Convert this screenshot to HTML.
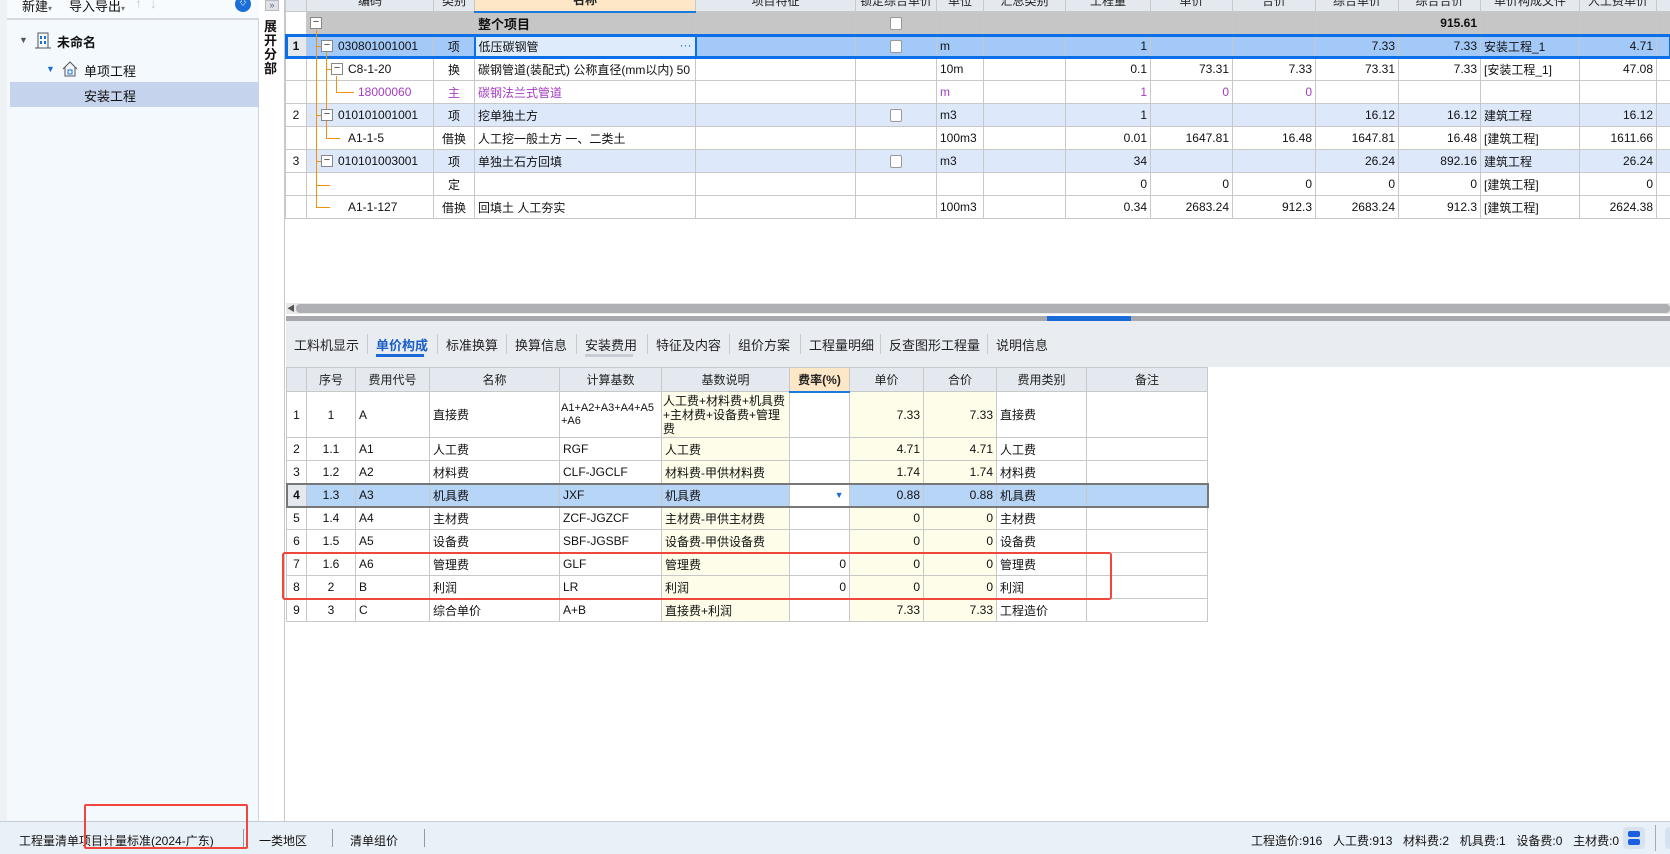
<!DOCTYPE html>
<html><head><meta charset="utf-8"><style>
*{margin:0;padding:0;box-sizing:border-box}
body{width:1670px;height:854px;position:relative;overflow:hidden;background:#fff;font:12px "Liberation Sans","Noto Sans CJK SC",sans-serif;color:#111}
.abs{position:absolute}
table{border-collapse:collapse;table-layout:fixed;position:absolute}
td{border:1px solid #c8c8c8;height:23px;padding:0 3px;white-space:nowrap;overflow:hidden;vertical-align:middle}
.r{text-align:right}.c{text-align:center}
.hd td{background:#e4e9f0;text-align:center;color:#222}
.bx{position:absolute;width:12px;height:12px;border:1px solid #888;background:#fff;font-size:11px;line-height:9px;text-align:center;color:#333}
.ol{position:absolute;background:#f0920e}
.cb{display:inline-block;width:12px;height:13px;border:1px solid #999;border-radius:2px;background:#fff;vertical-align:middle}
.pu{color:#a43cc0}
.y{background:#fefde9}
.tab{position:absolute;top:335px;font-size:13px;color:#222}
.sep{position:absolute;width:1px;background:#c8ccd2}
</style></head><body>
<!-- left panel -->
<div class="abs" style="left:0;top:0;width:7px;height:821px;background:#eef2f5"></div>
<div class="abs" style="left:7px;top:0;width:252px;height:821px;background:#f3f9fd;border-right:1px solid #d0d6dc"></div>
<div class="abs" style="left:7px;top:0;width:252px;height:20px;background:#f8fbfd;border-bottom:2px solid #d4dae0"></div>
<div class="abs" style="left:22px;top:-4px;font-size:13px">新建<span style="font-size:8px;color:#777">▾</span></div>
<div class="abs" style="left:69px;top:-4px;font-size:13px">导入导出<span style="font-size:8px;color:#777">▾</span></div>
<div class="abs" style="left:135px;top:-5px;font-size:14px;color:#ccc">↑ &nbsp;↓</div>
<div class="abs" style="left:235px;top:-4px;width:16px;height:16px;border-radius:8px;background:#1a6fd8;color:#fff;font-size:10px;text-align:center;line-height:14px">⇩</div>
<div class="abs" style="left:19px;top:35px;font-size:9px;color:#555">▼</div>
<svg class="abs" style="left:35px;top:31px" width="16" height="18"><rect x="3" y="2" width="10" height="15" fill="none" stroke="#555"/><rect x="5" y="5" width="2" height="3" fill="#1a6fd8"/><rect x="9" y="5" width="2" height="3" fill="#1a6fd8"/><rect x="5" y="10" width="2" height="3" fill="#1a6fd8"/><rect x="9" y="10" width="2" height="3" fill="#1a6fd8"/><line x1="0" y1="17" x2="16" y2="17" stroke="#555"/></svg>
<div class="abs" style="left:57px;top:32px;font-size:13px;font-weight:bold">未命名</div>
<div class="abs" style="left:46px;top:64px;font-size:9px;color:#1a6fd8">▼</div>
<svg class="abs" style="left:62px;top:61px" width="16" height="16"><path d="M1 8 L8 1 L15 8 M3 6 V15 H13 V6" fill="none" stroke="#555"/><rect x="6" y="9" width="4" height="4" fill="none" stroke="#1a6fd8"/></svg>
<div class="abs" style="left:84px;top:61px;font-size:13px">单项工程</div>
<div class="abs" style="left:10px;top:82px;width:249px;height:25px;background:#c5d3ec"></div>
<div class="abs" style="left:84px;top:86px;font-size:13px">安装工程</div>
<!-- vertical strip -->
<div class="abs" style="left:260px;top:0;width:25px;height:821px;background:#fff;border-right:1px solid #c8c8c8"></div>
<div class="abs" style="left:265px;top:0;width:14px;height:11px;background:#dde2e8;border:1px solid #bbb;font-size:9px;line-height:8px;text-align:center;color:#666">»</div>
<div class="abs" style="left:264px;top:20px;width:16px;font-size:13px;font-weight:bold;line-height:14px">展开分部</div>

<!-- top grid -->
<table style="left:285px;top:-12px;width:1385px">
<colgroup><col style="width:21px"><col style="width:127px"><col style="width:41px"><col style="width:221px"><col style="width:160px"><col style="width:81px"><col style="width:47px"><col style="width:82px"><col style="width:85px"><col style="width:82px"><col style="width:83px"><col style="width:83px"><col style="width:82px"><col style="width:99px"><col style="width:77px"><col style="width:14px"></colgroup>
<tr class="hd"><td></td><td>编码</td><td>类别</td><td style="background:#fde7c6;border-bottom:2px solid #1a7ae0;font-weight:bold">名称</td><td>项目特征</td><td>锁定综合单价</td><td>单位</td><td>汇总类别</td><td>工程量</td><td>单价</td><td>合价</td><td>综合单价</td><td>综合合价</td><td>单价构成文件</td><td>人工费单价</td><td></td></tr>
<tr style="background:#c6c6c6;font-weight:bold"><td style="background:#fff"></td><td></td><td></td><td style="font-size:13px">整个项目</td><td></td><td class="c"><span class="cb"></span></td><td></td><td></td><td></td><td></td><td></td><td></td><td class="r">915.61</td><td></td><td></td><td></td></tr>
<tr style="background:#a3c9f8;outline:3px solid #0a6fe8;outline-offset:-2px"><td class="c" style="background:#e4e9f0;font-weight:bold">1</td><td style="padding-left:31px">030801001001</td><td class="c">项</td><td style="background:#deebfb;border:2px solid #0a6fe8">低压碳钢管<span style="float:right;color:#1a6fd8">···</span></td><td></td><td class="c"><span class="cb"></span></td><td>m</td><td></td><td class="r">1</td><td></td><td></td><td class="r">7.33</td><td class="r">7.33</td><td>安装工程_1</td><td class="r">4.71</td><td></td></tr>
<tr><td></td><td style="padding-left:41px">C8-1-20</td><td class="c">换</td><td>碳钢管道(装配式) 公称直径(mm以内) 50</td><td></td><td></td><td>10m</td><td></td><td class="r">0.1</td><td class="r">73.31</td><td class="r">7.33</td><td class="r">73.31</td><td class="r">7.33</td><td>[安装工程_1]</td><td class="r">47.08</td><td></td></tr>
<tr class="pu"><td></td><td style="padding-left:51px">18000060</td><td class="c">主</td><td>碳钢法兰式管道</td><td></td><td></td><td>m</td><td></td><td class="r">1</td><td class="r">0</td><td class="r">0</td><td></td><td></td><td></td><td></td><td></td></tr>
<tr style="background:#dde9fb"><td class="c" style="background:#fff">2</td><td style="padding-left:31px">010101001001</td><td class="c">项</td><td>挖单独土方</td><td></td><td class="c"><span class="cb"></span></td><td>m3</td><td></td><td class="r">1</td><td></td><td></td><td class="r">16.12</td><td class="r">16.12</td><td>建筑工程</td><td class="r">16.12</td><td></td></tr>
<tr><td></td><td style="padding-left:41px">A1-1-5</td><td class="c">借换</td><td>人工挖一般土方 一、二类土</td><td></td><td></td><td>100m3</td><td></td><td class="r">0.01</td><td class="r">1647.81</td><td class="r">16.48</td><td class="r">1647.81</td><td class="r">16.48</td><td>[建筑工程]</td><td class="r">1611.66</td><td></td></tr>
<tr style="background:#dde9fb"><td class="c" style="background:#fff">3</td><td style="padding-left:31px">010101003001</td><td class="c">项</td><td>单独土石方回填</td><td></td><td class="c"><span class="cb"></span></td><td>m3</td><td></td><td class="r">34</td><td></td><td></td><td class="r">26.24</td><td class="r">892.16</td><td>建筑工程</td><td class="r">26.24</td><td></td></tr>
<tr><td></td><td></td><td class="c">定</td><td></td><td></td><td></td><td></td><td></td><td class="r">0</td><td class="r">0</td><td class="r">0</td><td class="r">0</td><td class="r">0</td><td>[建筑工程]</td><td class="r">0</td><td></td></tr>
<tr><td></td><td style="padding-left:41px">A1-1-127</td><td class="c">借换</td><td>回填土 人工夯实</td><td></td><td></td><td>100m3</td><td></td><td class="r">0.34</td><td class="r">2683.24</td><td class="r">912.3</td><td class="r">2683.24</td><td class="r">912.3</td><td>[建筑工程]</td><td class="r">2624.38</td><td></td></tr>
</table>
<!-- tree lines -->
<div class="ol" style="left:316px;top:30px;width:1px;height:178px"></div>
<div class="ol" style="left:316px;top:46px;width:5px;height:1px"></div>
<div class="ol" style="left:316px;top:115px;width:5px;height:1px"></div>
<div class="ol" style="left:316px;top:161px;width:5px;height:1px"></div>
<div class="ol" style="left:316px;top:185px;width:14px;height:1px"></div>
<div class="ol" style="left:316px;top:207px;width:14px;height:1px"></div>
<div class="ol" style="left:326px;top:52px;width:1px;height:86px"></div>
<div class="ol" style="left:326px;top:69px;width:5px;height:1px"></div>
<div class="ol" style="left:326px;top:138px;width:14px;height:1px"></div>
<div class="ol" style="left:336px;top:76px;width:1px;height:16px"></div>
<div class="ol" style="left:336px;top:92px;width:18px;height:1px"></div>
<div class="bx" style="left:310px;top:17px">−</div>
<div class="bx" style="left:321px;top:40px">−</div>
<div class="bx" style="left:331px;top:63px">−</div>
<div class="bx" style="left:321px;top:109px">−</div>
<div class="bx" style="left:321px;top:155px">−</div>

<!-- scrollbar / splitter -->
<div class="abs" style="left:286px;top:303px;width:1384px;height:11px;background:#e8e8e8"></div>
<div class="abs" style="left:296px;top:304px;width:1374px;height:9px;background:#aeb0b3;border-radius:4px"></div>
<div class="abs" style="left:287px;top:303px;font-size:8px;color:#555">◀</div>
<div class="abs" style="left:286px;top:316px;width:1384px;height:5px;background:#a6a8ab"></div>
<div class="abs" style="left:1047px;top:316px;width:84px;height:5px;background:#1a6ad8"></div>
<div class="abs" style="left:286px;top:321px;width:1384px;height:46px;background:#e9edf1"></div>
<div class="tab" style="left:294px">工料机显示</div>
<div class="tab" style="left:376px;color:#1a5fc8;font-weight:bold">单价构成</div>
<div class="abs" style="left:376px;top:354px;width:48px;height:3px;background:#1a6ad8"></div>
<div class="tab" style="left:446px">标准换算</div>
<div class="tab" style="left:515px">换算信息</div>
<div class="tab" style="left:585px">安装费用</div>
<div class="abs" style="left:585px;top:354px;width:48px;height:3px;background:#c8ccd4"></div>
<div class="tab" style="left:656px">特征及内容</div>
<div class="tab" style="left:738px">组价方案</div>
<div class="tab" style="left:809px">工程量明细</div>
<div class="tab" style="left:889px">反查图形工程量</div>
<div class="tab" style="left:996px">说明信息</div>
<div class="sep" style="left:367px;top:334px;height:20px"></div><div class="sep" style="left:437px;top:334px;height:20px"></div><div class="sep" style="left:506px;top:334px;height:20px"></div><div class="sep" style="left:576px;top:334px;height:20px"></div><div class="sep" style="left:647px;top:334px;height:20px"></div><div class="sep" style="left:729px;top:334px;height:20px"></div><div class="sep" style="left:800px;top:334px;height:20px"></div><div class="sep" style="left:880px;top:334px;height:20px"></div><div class="sep" style="left:987px;top:334px;height:20px"></div>

<!-- lower table -->
<table style="left:286px;top:367px;width:921px;font-size:12px">
<colgroup><col style="width:20px"><col style="width:49px"><col style="width:74px"><col style="width:130px"><col style="width:102px"><col style="width:128px"><col style="width:60px"><col style="width:74px"><col style="width:73px"><col style="width:90px"><col style="width:121px"></colgroup>
<tr class="hd" style="height:24px"><td></td><td>序号</td><td>费用代号</td><td>名称</td><td>计算基数</td><td>基数说明</td><td style="background:#fde7c6;border-bottom:2px solid #1a7ae0;font-weight:bold">费率(%)</td><td>单价</td><td>合价</td><td>费用类别</td><td>备注</td></tr>
<tr style="height:46px"><td class="c">1</td><td class="c">1</td><td>A</td><td>直接费</td><td style="white-space:normal;word-break:break-all;font-size:11px;line-height:13px;padding:0 1px">A1+A2+A3+A4+A5+A6</td><td class="y" style="white-space:normal;line-height:14px;padding:0 1px">人工费+材料费+机具费+主材费+设备费+管理费</td><td></td><td class="r y">7.33</td><td class="r y">7.33</td><td>直接费</td><td></td></tr>
<tr><td class="c">2</td><td class="c">1.1</td><td>A1</td><td>人工费</td><td>RGF</td><td class="y">人工费</td><td></td><td class="r y">4.71</td><td class="r y">4.71</td><td>人工费</td><td></td></tr>
<tr><td class="c">3</td><td class="c">1.2</td><td>A2</td><td>材料费</td><td>CLF-JGCLF</td><td class="y">材料费-甲供材料费</td><td></td><td class="r y">1.74</td><td class="r y">1.74</td><td>材料费</td><td></td></tr>
<tr style="background:#b7d5f6;outline:2px solid #777;outline-offset:-1px"><td class="c" style="background:#e4e9f0;font-weight:bold">4</td><td class="c">1.3</td><td>A3</td><td>机具费</td><td>JXF</td><td>机具费</td><td style="background:#fff;text-align:right;color:#1a6fd8;font-size:9px">▼&nbsp;</td><td class="r">0.88</td><td class="r">0.88</td><td>机具费</td><td></td></tr>
<tr><td class="c">5</td><td class="c">1.4</td><td>A4</td><td>主材费</td><td>ZCF-JGZCF</td><td class="y">主材费-甲供主材费</td><td></td><td class="r y">0</td><td class="r y">0</td><td>主材费</td><td></td></tr>
<tr><td class="c">6</td><td class="c">1.5</td><td>A5</td><td>设备费</td><td>SBF-JGSBF</td><td class="y">设备费-甲供设备费</td><td></td><td class="r y">0</td><td class="r y">0</td><td>设备费</td><td></td></tr>
<tr><td class="c">7</td><td class="c">1.6</td><td>A6</td><td>管理费</td><td>GLF</td><td class="y">管理费</td><td class="r">0</td><td class="r y">0</td><td class="r y">0</td><td>管理费</td><td></td></tr>
<tr><td class="c">8</td><td class="c">2</td><td>B</td><td>利润</td><td>LR</td><td class="y">利润</td><td class="r">0</td><td class="r y">0</td><td class="r y">0</td><td>利润</td><td></td></tr>
<tr><td class="c">9</td><td class="c">3</td><td>C</td><td>综合单价</td><td>A+B</td><td class="y">直接费+利润</td><td></td><td class="r y">7.33</td><td class="r y">7.33</td><td>工程造价</td><td></td></tr>
</table>
<div class="abs" style="left:282px;top:552px;width:830px;height:48px;border:2px solid #f0463c;border-radius:3px"></div>

<!-- status bar -->
<div class="abs" style="left:0;top:821px;width:1670px;height:33px;background:#e9f1f8;border-top:1px solid #c8ccd2"></div>
<div class="abs" style="left:19px;top:832px;font-size:12px">工程量清单项目计量标准(2024-广东)</div>
<div class="sep" style="left:243px;top:829px;height:18px;background:#999"></div>
<div class="abs" style="left:259px;top:832px">一类地区</div>
<div class="sep" style="left:332px;top:829px;height:18px;background:#999"></div>
<div class="abs" style="left:350px;top:832px">清单组价</div>
<div class="sep" style="left:424px;top:829px;height:18px;background:#999"></div>
<div class="abs" style="left:1251px;top:832px;font-size:12px;word-spacing:2px">工程造价:916 &nbsp;人工费:913 &nbsp;材料费:2 &nbsp;机具费:1 &nbsp;设备费:0 &nbsp;主材费:0</div>
<div class="abs" style="left:1623px;top:827px;width:22px;height:22px;border-radius:4px;background:#d6e2ef"></div>
<div class="abs" style="left:1628px;top:831px;width:12px;height:6px;border-radius:2px;background:#1a5fe0"></div>
<div class="abs" style="left:1628px;top:839px;width:12px;height:6px;border-radius:2px;background:#1a5fe0"></div>
<div class="sep" style="left:1655px;top:825px;height:26px;background:#aaa"></div>
<div class="abs" style="left:1665px;top:827px;width:10px;height:22px;border-radius:4px;background:#d6e2ef"></div>
<div class="abs" style="left:84px;top:804px;width:164px;height:45px;border:2px solid #f0463c;border-radius:2px"></div>
</body></html>
